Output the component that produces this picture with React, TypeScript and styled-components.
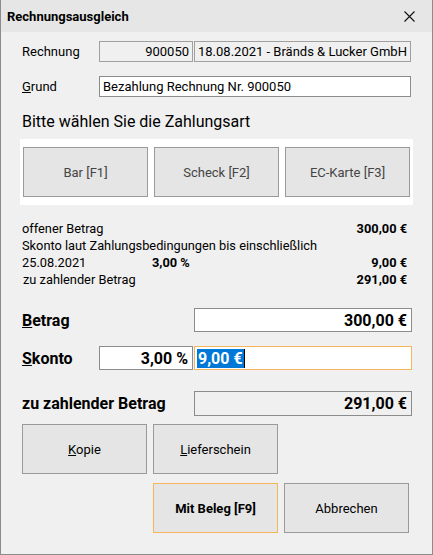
import React from 'react';
import styled, { createGlobalStyle } from 'styled-components';

const GlobalStyle = createGlobalStyle`
  html, body {
    margin: 0;
    padding: 0;
    background: #f0f0f0;
  }
  * {
    box-sizing: border-box;
  }
`;

const Window = styled.div`
  width: 433px;
  height: 555px;
  background: #f0f0f0;
  border: 1px solid #8c8c8c;
  border-top: none;
  font-family: Roboto, 'Liberation Sans', sans-serif;
  color: #000;
  display: flex;
  flex-direction: column;
`;

const TitleBar = styled.div`
  height: 32px;
  background: #e6e6e6;
  display: flex;
  align-items: center;
  justify-content: space-between;
  padding: 0 17px 0 6px;
  font-size: 13px;
  font-weight: 700;
`;

const CloseIcon = () => (
  <svg width="11" height="11" viewBox="0 0 11 11">
    <path d="M0.5 0.5 L10.5 10.5 M10.5 0.5 L0.5 10.5" stroke="#111" strokeWidth="1.1" />
  </svg>
);

const Body = styled.div`
  padding: 9px 21px 0 21px;
  display: flex;
  flex-direction: column;
`;

const HeadRow = styled.div<{ $mt?: number }>`
  display: grid;
  grid-template-columns: 76px 94px 1fr;
  column-gap: 1px;
  align-items: center;
  margin-top: ${(p) => p.$mt ?? 0}px;
  font-size: 13px;
`;

const Label = styled.span`
  font-size: 13px;
`;

const ReadBox = styled.div<{ $align?: string }>`
  height: 21px;
  border: 1px solid #a0a0a0;
  background: #f0f0f0;
  display: flex;
  align-items: center;
  justify-content: ${(p) => (p.$align === 'right' ? 'flex-end' : 'flex-start')};
  padding: 0 3px;
  font-size: 13px;
  white-space: nowrap;
`;

const TextBox = styled.div`
  grid-column: 2 / 4;
  height: 21px;
  border: 1px solid #8c8c8c;
  background: #fff;
  display: flex;
  align-items: center;
  padding: 0 3px;
  font-size: 13px;
`;

const Heading = styled.div`
  margin-top: 15px;
  font-size: 16px;
  line-height: 20px;
`;

const PayPanel = styled.div`
  margin: 7px -2px 0 -2px;
  background: #fff;
  padding: 8px 3px;
  display: grid;
  grid-template-columns: repeat(3, 125px);
  column-gap: 6px;
`;

const Button = styled.div<{ $focus?: boolean; $bold?: boolean; $dim?: boolean }>`
  height: 50px;
  background: #e5e5e5;
  border: 1px solid ${(p) => (p.$focus ? '#f5b55a' : '#9a9a9a')};
  display: flex;
  align-items: center;
  justify-content: center;
  font-size: 13px;
  font-weight: ${(p) => (p.$bold ? 700 : 400)};
  color: ${(p) => (p.$dim ? '#444' : '#000')};
`;

const Info = styled.div`
  margin-top: 15px;
  padding-right: 4px;
  font-size: 12.8px;
  display: flex;
  flex-direction: column;
`;

const InfoRow = styled.div<{ $indent?: number }>`
  display: flex;
  align-items: center;
  height: 17px;
  padding-left: ${(p) => p.$indent ?? 0}px;
`;

const InfoText = styled.span<{ $w?: number }>`
  width: ${(p) => (p.$w ? `${p.$w}px` : 'auto')};
  flex: ${(p) => (p.$w ? 'none' : '1')};
`;

const InfoValue = styled.span`
  font-weight: 700;
  margin-left: auto;
`;

const FieldRow = styled.div<{ $mt: number }>`
  display: grid;
  grid-template-columns: 76px 94px 218px;
  column-gap: 1px;
  align-items: center;
  margin-top: ${(p) => p.$mt}px;
`;

const BigLabel = styled.span<{ $span?: boolean }>`
  font-size: 16px;
  font-weight: 700;
  grid-column: ${(p) => (p.$span ? '1 / 3' : 'auto')};
  white-space: nowrap;
`;

const NumBox = styled.div<{ $col?: number; $focus?: boolean; $ro?: boolean; $h?: number }>`
  grid-column: ${(p) => p.$col ?? 3};
  height: ${(p) => p.$h ?? 24}px;
  border: 1px solid ${(p) => (p.$focus ? '#f5b55a' : '#8c8c8c')};
  background: ${(p) => (p.$ro ? '#f0f0f0' : '#fff')};
  display: flex;
  align-items: center;
  justify-content: ${(p) => (p.$focus ? 'flex-start' : 'flex-end')};
  padding: 0 4px 0 2px;
  font-size: 16px;
  font-weight: 700;
`;

const Selected = styled.span`
  background: #0078d7;
  color: #fff;
  padding: 0 1px;
  line-height: 19px;
  border-right: 1px solid #000;
`;

const ButtonGrid = styled.div<{ $mt: number }>`
  display: grid;
  grid-template-columns: repeat(3, 125px);
  column-gap: 6px;
  margin-top: ${(p) => p.$mt}px;
`;

const App: React.FC = () => {
  return (
    <>
      <GlobalStyle />
      <Window>
        <TitleBar>
          <span>Rechnungsausgleich</span>
          <CloseIcon />
        </TitleBar>
        <Body>
          <HeadRow>
            <Label>Rechnung</Label>
            <ReadBox $align="right">900050</ReadBox>
            <ReadBox>18.08.2021 - Bränds &amp; Lucker GmbH</ReadBox>
          </HeadRow>
          <HeadRow $mt={14}>
            <Label>
              <u>G</u>rund
            </Label>
            <TextBox>Bezahlung Rechnung Nr. 900050</TextBox>
          </HeadRow>

          <Heading>Bitte wählen Sie die Zahlungsart</Heading>
          <PayPanel>
            <Button $dim>Bar [F1]</Button>
            <Button $dim>Scheck [F2]</Button>
            <Button $dim>EC-Karte [F3]</Button>
          </PayPanel>

          <Info>
            <InfoRow>
              <InfoText>offener Betrag</InfoText>
              <InfoValue>300,00 €</InfoValue>
            </InfoRow>
            <InfoRow>
              <InfoText>Skonto laut Zahlungsbedingungen bis einschließlich</InfoText>
            </InfoRow>
            <InfoRow>
              <InfoText $w={130}>25.08.2021</InfoText>
              <b>3,00 %</b>
              <InfoValue>9,00 €</InfoValue>
            </InfoRow>
            <InfoRow $indent={1}>
              <InfoText>zu zahlender Betrag</InfoText>
              <InfoValue>291,00 €</InfoValue>
            </InfoRow>
          </Info>

          <FieldRow $mt={20}>
            <BigLabel $span>
              <u>B</u>etrag
            </BigLabel>
            <NumBox>300,00 €</NumBox>
          </FieldRow>
          <FieldRow $mt={14}>
            <BigLabel>
              <u>S</u>konto
            </BigLabel>
            <NumBox $col={2}>3,00 %</NumBox>
            <NumBox $focus>
              <Selected>9,00 €</Selected>
            </NumBox>
          </FieldRow>
          <FieldRow $mt={21}>
            <BigLabel $span>zu zahlender Betrag</BigLabel>
            <NumBox $ro $h={25}>291,00 €</NumBox>
          </FieldRow>

          <ButtonGrid $mt={8}>
            <Button>
              <span>
                <u>K</u>opie
              </span>
            </Button>
            <Button>
              <span>
                <u>L</u>ieferschein
              </span>
            </Button>
          </ButtonGrid>
          <ButtonGrid $mt={9}>
            <span />
            <Button $focus $bold>
              Mit Beleg [F9]
            </Button>
            <Button>Abbrechen</Button>
          </ButtonGrid>
        </Body>
      </Window>
    </>
  );
};

export default App;
